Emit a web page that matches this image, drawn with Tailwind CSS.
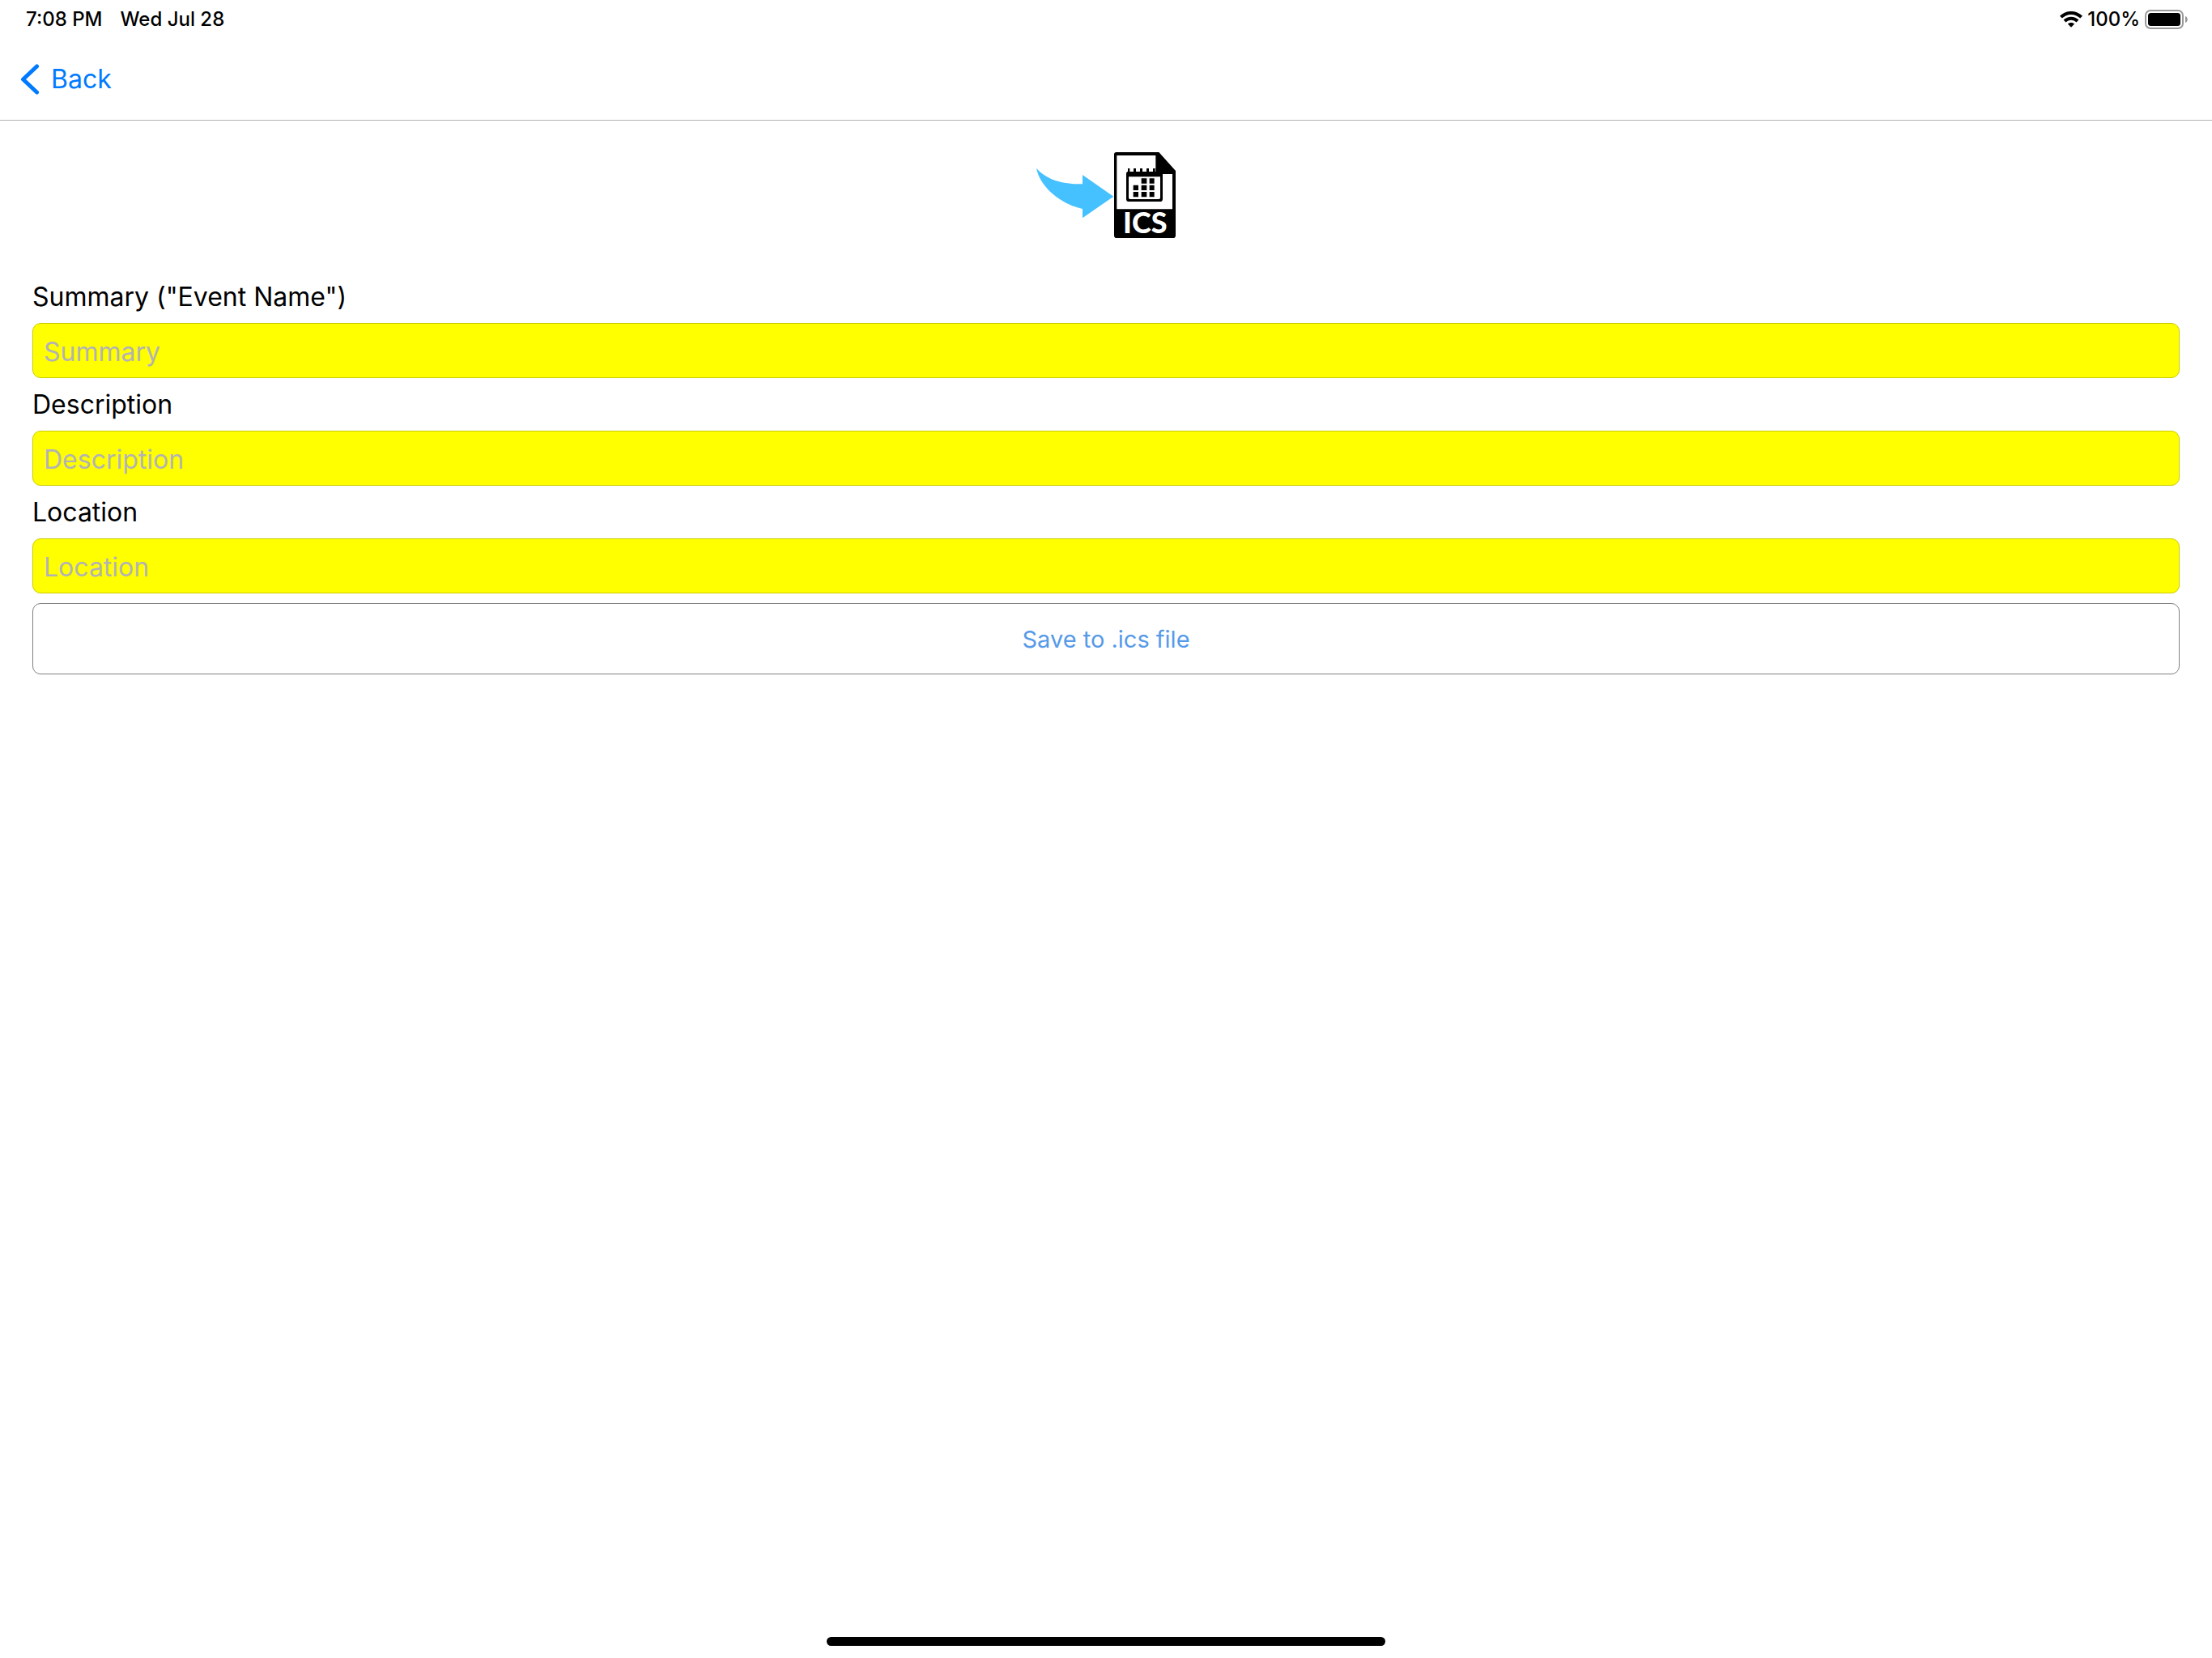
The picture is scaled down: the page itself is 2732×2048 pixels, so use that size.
<!DOCTYPE html>
<html lang="en">
<head>
<meta charset="utf-8">
<meta name="viewport" content="width=device-width, initial-scale=1">
<title>Save to .ics file</title>
<script src="https://cdn.jsdelivr.net/npm/@tailwindcss/browser@4"></script>
</head>
<body class="flex min-h-screen flex-col bg-white font-[Inter,sans-serif] text-black">
  <div class="flex h-12 items-center justify-between pr-[30px] pl-8 text-2xl font-medium">
    <div class="flex gap-[22px]">
      <span>7:08 PM</span>
      <span>Wed Jul 28</span>
    </div>
    <div class="flex items-center gap-[6px]">
      <svg class="h-5 w-7" viewBox="0 0 28 20" fill="none" stroke="#000" stroke-width="4" aria-label="Wi-Fi">
        <path d="M1.4 7.2C8.5 .2 19.5 .2 26.6 7.2"/>
        <path d="M6 12C10.600 7.600 17.400 7.600 22 12"/>
        <path d="M14 19.800L9.800 15.600C12.200 13.400 15.800 13.400 18.200 15.600Z" fill="#000" stroke="none"/>
      </svg>
      <span>100%</span>
      <svg class="h-6 w-[53px]" viewBox="0 0 53 24" aria-label="Battery full">
        <rect x="1" y="1" width="46" height="22" rx="6" fill="none" stroke="#999" stroke-width="2"/>
        <rect x="4" y="4" width="40" height="16" rx="3.500"/>
        <path d="M50 8C53.700 9 53.700 15 50 16Z" fill="#999"/>
      </svg>
    </div>
  </div>

  <header class="flex h-[101px] items-center border-b border-[#b2b2b2] px-6">
    <button type="button" class="flex items-center gap-[15px] text-[32px] leading-10 text-[#007aff]">
      <svg class="h-10 w-6" viewBox="0 0 24 40" fill="none" stroke="currentColor" stroke-width="5" stroke-linecap="round" stroke-linejoin="round">
        <path d="M21.500 4L4.500 20L21.500 36"/>
      </svg>
      Back
    </button>
  </header>

  <main class="flex grow flex-col px-10 pt-[39px]">
    <svg class="h-[106px] w-[172px] self-center overflow-visible" viewBox="30 39 516 318" role="img" aria-label="Export to ICS">
      <path fill="#46c1ff" d="M30 98C68 142 130 158 201 157V123L316 203L201 283V249C118 230 43 166 30 98Z"/>
      <path d="M326 39H484L546 108V347Q546 357 536 357H328Q318 357 318 347V47Q318 39 326 39Z"/>
      <path fill="#fff" d="M328 51H472V120H534V250H328Z"/>
      <path fill-rule="evenodd" d="M369 99h7v12h14v-12h9v12h15v-12h9v12h15v-12h9v12h15v-12h8v12h20Q498 111 498 120V212Q498 222 488 222H373Q363 222 363 212V120Q363 111 369 111ZM372 130V208Q372 213 377 213H484Q489 213 489 208V130Z"/>
      <path d="M419 136h20v19h-20zM449 136h18v19h-18zM389 161h19v19h-19zM419 161h20v19h-20zM449 161h18v19h-18zM389 186h19v19h-19zM419 186h20v19h-20zM449 186h18v19h-18z"/>
      <text x="433" y="339" text-anchor="middle" fill="#fff" class="font-[Lato,sans-serif] text-[108px] font-black">ICS</text>
    </svg>

    <form class="mt-10 flex flex-col">
      <label for="summary" class="h-[65px] pt-[13px] text-[32px] leading-10">Summary ("Event Name")</label>
      <input id="summary" type="text" placeholder="Summary" class="h-[68px] rounded-[10px] border border-[#cccc00] bg-[#ffff00] px-[13px] pt-[2px] text-[32px] leading-10 placeholder:text-[#b3b3b3]">
      <label for="description" class="h-[65px] pt-[13px] text-[32px] leading-10">Description</label>
      <input id="description" type="text" placeholder="Description" class="h-[68px] rounded-[10px] border border-[#cccc00] bg-[#ffff00] px-[13px] pt-[2px] text-[32px] leading-10 placeholder:text-[#b3b3b3]">
      <label for="location" class="h-[65px] pt-[13px] text-[32px] leading-10">Location</label>
      <input id="location" type="text" placeholder="Location" class="h-[68px] rounded-[10px] border border-[#cccc00] bg-[#ffff00] px-[13px] pt-[2px] text-[32px] leading-10 placeholder:text-[#b3b3b3]">
      <button type="button" class="mt-3 h-[88px] rounded-[10px] border border-[#808080] pt-[2px] text-[29px] leading-10 text-[#569ae8]">Save to .ics file</button>
    </form>
  </main>

  <div class="mb-[15px] h-[11px] w-[690px] max-w-full self-center rounded-full bg-black"></div>
</body>
</html>
